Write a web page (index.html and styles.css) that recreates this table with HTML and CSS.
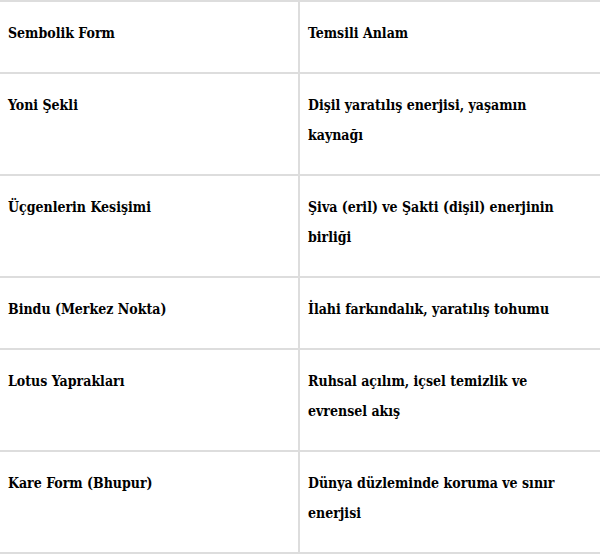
FILE: index.html
```html
<!DOCTYPE html>
<html lang="tr">
<head>
<meta charset="utf-8">
<link rel="stylesheet" href="styles.css">
</head>
<body>
<table class="tbl">
<tbody>
<tr><td>Sembolik Form</td><td>Temsili Anlam</td></tr>
<tr><td>Yoni Şekli</td><td>Dişil yaratılış enerjisi, yaşamın kaynağı</td></tr>
<tr><td>Üçgenlerin Kesişimi</td><td>Şiva (eril) ve Şakti (dişil) enerjinin birliği</td></tr>
<tr><td>Bindu (Merkez Nokta)</td><td>İlahi farkındalık, yaratılış tohumu</td></tr>
<tr><td>Lotus Yaprakları</td><td>Ruhsal açılım, içsel temizlik ve evrensel akış</td></tr>
<tr><td>Kare Form (Bhupur)</td><td>Dünya düzleminde koruma ve sınır enerjisi</td></tr>
</tbody>
</table>
</body>
</html>
```
FILE: styles.css
```css
html, body {
  margin: 0;
  padding: 0;
  background: #fff;
}
.tbl {
  width: 600px;
  border-collapse: collapse;
  table-layout: fixed;
  font-family: "DejaVu Serif Condensed", "DejaVu Serif", serif;
  font-stretch: condensed;
  font-weight: bold;
  font-size: 14px;
  color: #000;
}
.tbl td {
  border-top: 2px solid #ddd;
  border-bottom: 2px solid #ddd;
  padding: 16px 30px 24px 8px;
  line-height: 30px;
  vertical-align: top;
}
.tbl td:first-child {
  width: 260px;
  border-right: 2px solid #ddd;
}
```
